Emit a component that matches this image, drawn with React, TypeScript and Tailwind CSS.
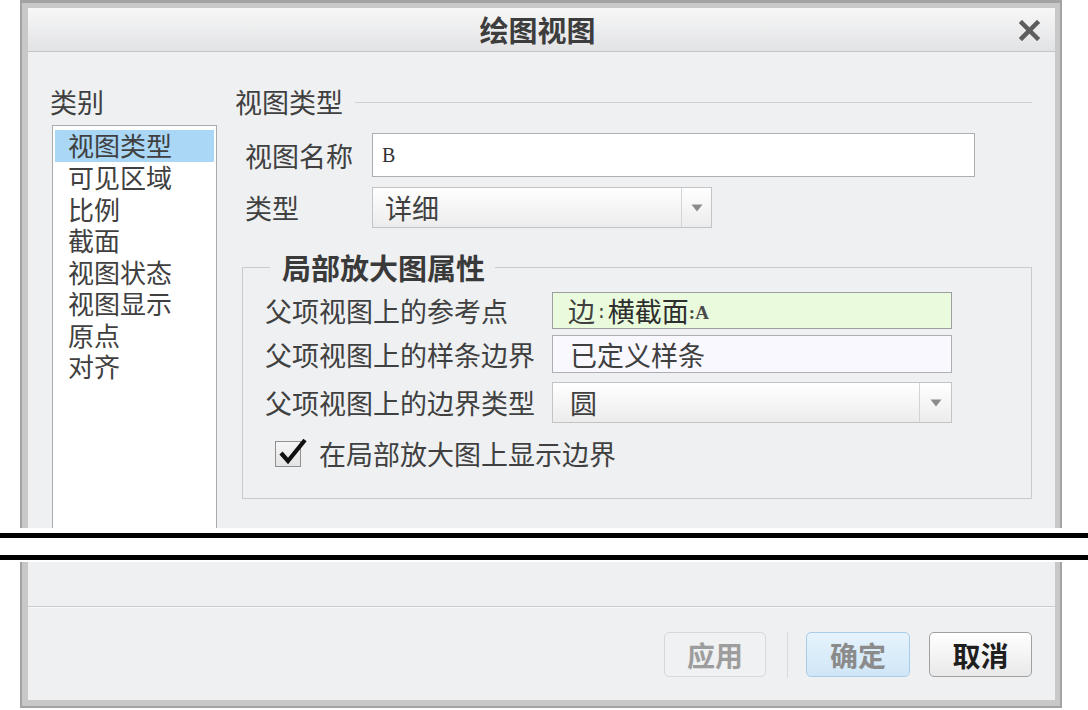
import React from "react";

function Arrow() {
  return (
    <svg width="12" height="8" viewBox="0 0 12 8">
      <path d="M0.5 0.5 L11.5 0.5 L6 7.5 Z" fill="#8a8b8d" />
    </svg>
  );
}

function CloseX() {
  return (
    <svg width="21" height="21" viewBox="0 0 21 21">
      <path d="M3 3 L18 18 M18 3 L3 18" stroke="#5e5e5e" strokeWidth="4.5" strokeLinecap="square" />
    </svg>
  );
}

const items = ["视图类型", "可见区域", "比例", "截面", "视图状态", "视图显示", "原点", "对齐"];

export default function App() {
  return (
    <div className="w-[1088px] h-[710px] bg-white overflow-hidden font-['Noto_Sans_CJK_SC','Noto_Sans',sans-serif] text-[#404040]">
      {/* top part of dialog */}
      <div className="ml-[20px] w-[1042px] h-[528px] flex flex-col border-t-[3px] border-x-[2px] border-[#a3a3a3] bg-[#c8c8c8] pt-[5px] pl-[6px] pr-[5px] overflow-hidden">
        <div className="flex flex-col flex-1 bg-[#eef0f2] overflow-hidden">
          {/* title bar */}
          <div className="h-[44px] shrink-0 grid grid-cols-[60px_1fr_60px] items-center border-b border-[#c4c5c7] bg-gradient-to-b from-[#f7f7f7] to-[#e2e3e5]">
            <div />
            <div className="text-center font-bold text-[29px] leading-none text-[#3d3d3d] pr-[8px]">绘图视图</div>
            <div className="flex justify-end pr-[15px] pt-[2px]">
              <CloseX />
            </div>
          </div>
          {/* body */}
          <div className="flex flex-1 pt-[34px] pl-[22px]">
            {/* left column */}
            <div className="w-[167px] flex flex-col">
              <div className="text-[27px] leading-[31px]">类别</div>
              <div className="mt-[8px] ml-[2px] w-[165px] flex-1 bg-white border border-[#aaabad] border-b-0 pt-[4px] px-[2px]">
                {items.map((t, i) => (
                  <div
                    key={t}
                    className={
                      i === 0
                        ? "h-[32px] leading-[30px] pl-[13px] text-[26px] bg-[#a9d7f5]"
                        : "h-[31.5px] leading-[30px] pl-[13px] text-[26px]"
                    }
                  >
                    {t}
                  </div>
                ))}
              </div>
            </div>
            {/* right column */}
            <div className="ml-[18px] w-[797px] flex flex-col">
              <div className="flex items-center">
                <span className="text-[27px] leading-[31px]">视图类型</span>
                <div className="flex-1 h-px bg-[#cfd0d2] ml-[12px] mt-[2px]" />
              </div>
              <div className="mt-[16px] flex items-center">
                <div className="w-[137px] pl-[10px] text-[27px] leading-[31px]">视图名称</div>
                <div className="w-[603px] h-[44px] bg-white border border-[#adaeb0] pl-[9px] flex items-center font-['Liberation_Serif',serif] text-[20px] text-[#333]">
                  B
                </div>
              </div>
              <div className="mt-[10px] flex items-center">
                <div className="w-[137px] pl-[10px] text-[27px] leading-[31px]">类型</div>
                <div className="w-[340px] h-[41px] border border-[#c3c4c6] bg-gradient-to-b from-white to-[#ececec] flex">
                  <div className="flex-1 pl-[12px] text-[27px] leading-[39px]">详细</div>
                  <div className="w-[30px] border-l border-[#d3d4d6] flex items-center justify-center">
                    <Arrow />
                  </div>
                </div>
              </div>
              {/* group box */}
              <fieldset className="mt-[24px] ml-[7px] w-[790px] h-[247px] border border-[#c9cacc] pl-[22px]">
                <legend className="ml-[5px] pl-[12px] pr-[10px] font-bold text-[29px] leading-[30px] text-[#3a3a3a]">
                  局部放大图属性
                </legend>
                <div className="mt-[10px] flex items-center">
                  <div className="w-[287px] text-[27px] leading-[31px]">父项视图上的参考点</div>
                  <div className="w-[400px] h-[37px] bg-[#e9fbdc] border border-[#9d9e9f] pl-[15px] flex items-center text-[27px] leading-[31px]">
                    <span>边</span>
                    <span className="font-['Liberation_Mono',monospace] text-[18px] leading-none mt-[4px] mx-[1px]">:</span>
                    <span className="text-[#2e2e2e]">横截面</span>
                    <span className="font-['Liberation_Serif',serif] text-[19px] leading-none mt-[4px] font-bold text-[#4a4a4a]">:A</span>
                  </div>
                </div>
                <div className="mt-[6px] flex items-center">
                  <div className="w-[287px] text-[27px] leading-[31px]">父项视图上的样条边界</div>
                  <div className="w-[400px] h-[38px] bg-[#f9f8fe] border border-[#adaeb0] pl-[17px] flex items-center text-[27px] leading-[31px]">
                    已定义样条
                  </div>
                </div>
                <div className="mt-[9px] flex items-center">
                  <div className="w-[287px] text-[27px] leading-[31px]">父项视图上的边界类型</div>
                  <div className="w-[400px] h-[41px] border border-[#c3c4c6] bg-gradient-to-b from-white to-[#ececec] flex">
                    <div className="flex-1 pl-[17px] text-[27px] leading-[39px]">圆</div>
                    <div className="w-[32px] border-l border-[#d3d4d6] flex items-center justify-center">
                      <Arrow />
                    </div>
                  </div>
                </div>
                <div className="mt-[15px] flex items-center pl-[10px]">
                  <div className="relative w-[26px] h-[26px] border border-[#8f9092] bg-gradient-to-b from-[#f6f6f6] to-[#e4e4e4]">
                    <svg className="absolute left-[1px] top-[-5px]" width="32" height="30" viewBox="0 0 32 30">
                      <path d="M4 16 L11 24 L28 3" stroke="#111" strokeWidth="4.2" fill="none" strokeLinejoin="miter" />
                    </svg>
                  </div>
                  <div className="ml-[18px] text-[27px] leading-[31px]">在局部放大图上显示边界</div>
                </div>
              </fieldset>
            </div>
          </div>
        </div>
      </div>

      {/* break lines */}
      <div className="mt-[5px] h-[5px] bg-black" />
      <div className="mt-[17px] h-[5px] bg-black" />

      {/* bottom part of dialog */}
      <div className="mt-[2px] ml-[20px] w-[1042px] h-[146px] flex flex-col border-x-[2px] border-b-[2px] border-[#a3a3a3] bg-[#c8c8c8] pl-[6px] pr-[5px] pb-[6px]">
        <div className="flex-1 flex flex-col bg-[#eef0f2]">
          <div className="h-[45px] border-b border-[#cacbcd]" />
          <div className="h-px bg-[#f8f8f9]" />
          <div className="flex-1 flex justify-end items-start pt-[24px] pr-[23px]">
            <div className="w-[102px] h-[45px] rounded-[5px] border border-[#d7d8da] bg-[#f0f1f2] flex items-center justify-center font-bold text-[28px] text-[#9d9d9d]">
              应用
            </div>
            <div className="ml-[21px] w-px h-[46px] bg-[#d9dadc]" />
            <div className="ml-[18px] w-[104px] h-[45px] rounded-[5px] border border-[#a9cde8] bg-gradient-to-b from-[#e6f3fc] to-[#cfe6f7] flex items-center justify-center font-bold text-[28px] text-[#8b8b8b]">
              确定
            </div>
            <div className="ml-[19px] w-[103px] h-[45px] rounded-[5px] border border-[#9fa0a2] bg-gradient-to-b from-white to-[#e9e9e9] flex items-center justify-center font-bold text-[28px] text-[#1e1e1e]">
              取消
            </div>
          </div>
        </div>
      </div>
    </div>
  );
}
